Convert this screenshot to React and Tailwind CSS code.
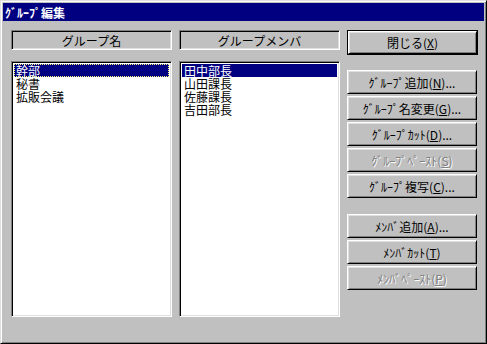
import React from "react";

const FONT = { fontFamily: '"Noto Sans CJK JP", "Noto Sans", sans-serif' };

function U({ children }) {
  return <span className="underline underline-offset-[1px]">{children}</span>;
}

function Btn({ children, disabled, def }) {
  const inner = (
    <div className="flex h-[24px] w-[130px] items-center justify-center border border-t-white border-l-white border-r-black border-b-black bg-[#c0c0c0] shadow-[inset_1px_1px_#dfdfdf,inset_-1px_-1px_#808080]">
      {disabled ? (
        <span className="text-[12px] leading-[13px] text-[#808080] [text-shadow:1px_1px_0_#fff]">{children}</span>
      ) : (
        <span className="text-[12px] leading-[13px] text-black">{children}</span>
      )}
    </div>
  );
  if (def) {
    return <div className="border border-black w-[131px] h-[25px] [&>div]:h-[23px] [&>div]:w-[129px]">{inner}</div>;
  }
  return inner;
}

function Item({ children, selected, focus }) {
  if (selected) {
    return (
      <div className={focus ? "h-[13px] outline outline-1 outline-dotted outline-offset-[-1px] outline-[#ffff80] bg-[#000080] px-[2px] text-white text-[12px] leading-[13px] whitespace-nowrap" : "h-[13px] bg-[#000080] px-[2px] text-white text-[12px] leading-[13px] whitespace-nowrap"}>
        {children}
      </div>
    );
  }
  return (
    <div className="h-[13px] px-[2px] text-black text-[12px] leading-[13px] whitespace-nowrap">
      {children}
    </div>
  );
}

const sunken =
  "border border-t-[#808080] border-l-[#808080] border-r-white border-b-white shadow-[inset_1px_1px_#000,inset_-1px_-1px_#dfdfdf]";

export default function App() {
  return (
    <div style={FONT} className="w-[487px] h-[344px] bg-[#c0c0c0] border border-t-[#dfdfdf] border-l-[#dfdfdf] border-r-black border-b-black shadow-[inset_1px_1px_#fff,inset_-1px_-1px_#808080] p-[2px] select-none">
      <div className="h-[18px] bg-[#000080] flex items-center pl-[2px]">
        <span className="text-white text-[12px] font-bold leading-[13px]">ｸﾞﾙｰﾌﾟ編集</span>
      </div>
      <div className="flex pl-[8px] pt-[9px]">
        <div className="w-[161px] flex flex-col">
          <div className={`h-[20px] flex items-center justify-center ${sunken}`}>
            <span className="text-[12px] leading-[13px] text-black">グループ名</span>
          </div>
          <div className={`mt-[11px] h-[256px] bg-white p-[1px] ${sunken}`}>
            <div className="p-[1px]">
              <Item selected focus>幹部</Item>
              <Item>秘書</Item>
              <Item>拡販会議</Item>
            </div>
          </div>
        </div>
        <div className="w-[161px] ml-[7px] flex flex-col">
          <div className={`h-[20px] flex items-center justify-center ${sunken}`}>
            <span className="text-[12px] leading-[13px] text-black">グループメンバ</span>
          </div>
          <div className={`mt-[11px] h-[256px] bg-white p-[1px] ${sunken}`}>
            <div className="p-[1px]">
              <Item selected>田中部長</Item>
              <Item>山田課長</Item>
              <Item>佐藤課長</Item>
              <Item>吉田部長</Item>
            </div>
          </div>
        </div>
        <div className="ml-[7px] flex flex-col">
          <Btn def>閉じる(<U>X</U>)</Btn>
          <div className="mt-[15px] flex flex-col gap-[2px]">
            <Btn>ｸﾞﾙｰﾌﾟ追加(<U>N</U>)...</Btn>
            <Btn>ｸﾞﾙｰﾌﾟ名変更(<U>G</U>)...</Btn>
            <Btn>ｸﾞﾙｰﾌﾟｶｯﾄ(<U>D</U>)...</Btn>
            <Btn disabled>ｸﾞﾙｰﾌﾟﾍﾟｰｽﾄ(<U>S</U>)</Btn>
            <Btn>ｸﾞﾙｰﾌﾟ複写(<U>C</U>)...</Btn>
          </div>
          <div className="mt-[16px] flex flex-col gap-[2px]">
            <Btn>ﾒﾝﾊﾞ追加(<U>A</U>)...</Btn>
            <Btn>ﾒﾝﾊﾞｶｯﾄ(<U>T</U>)</Btn>
            <Btn disabled>ﾒﾝﾊﾞﾍﾟｰｽﾄ(<U>P</U>)</Btn>
          </div>
        </div>
      </div>
    </div>
  );
}
